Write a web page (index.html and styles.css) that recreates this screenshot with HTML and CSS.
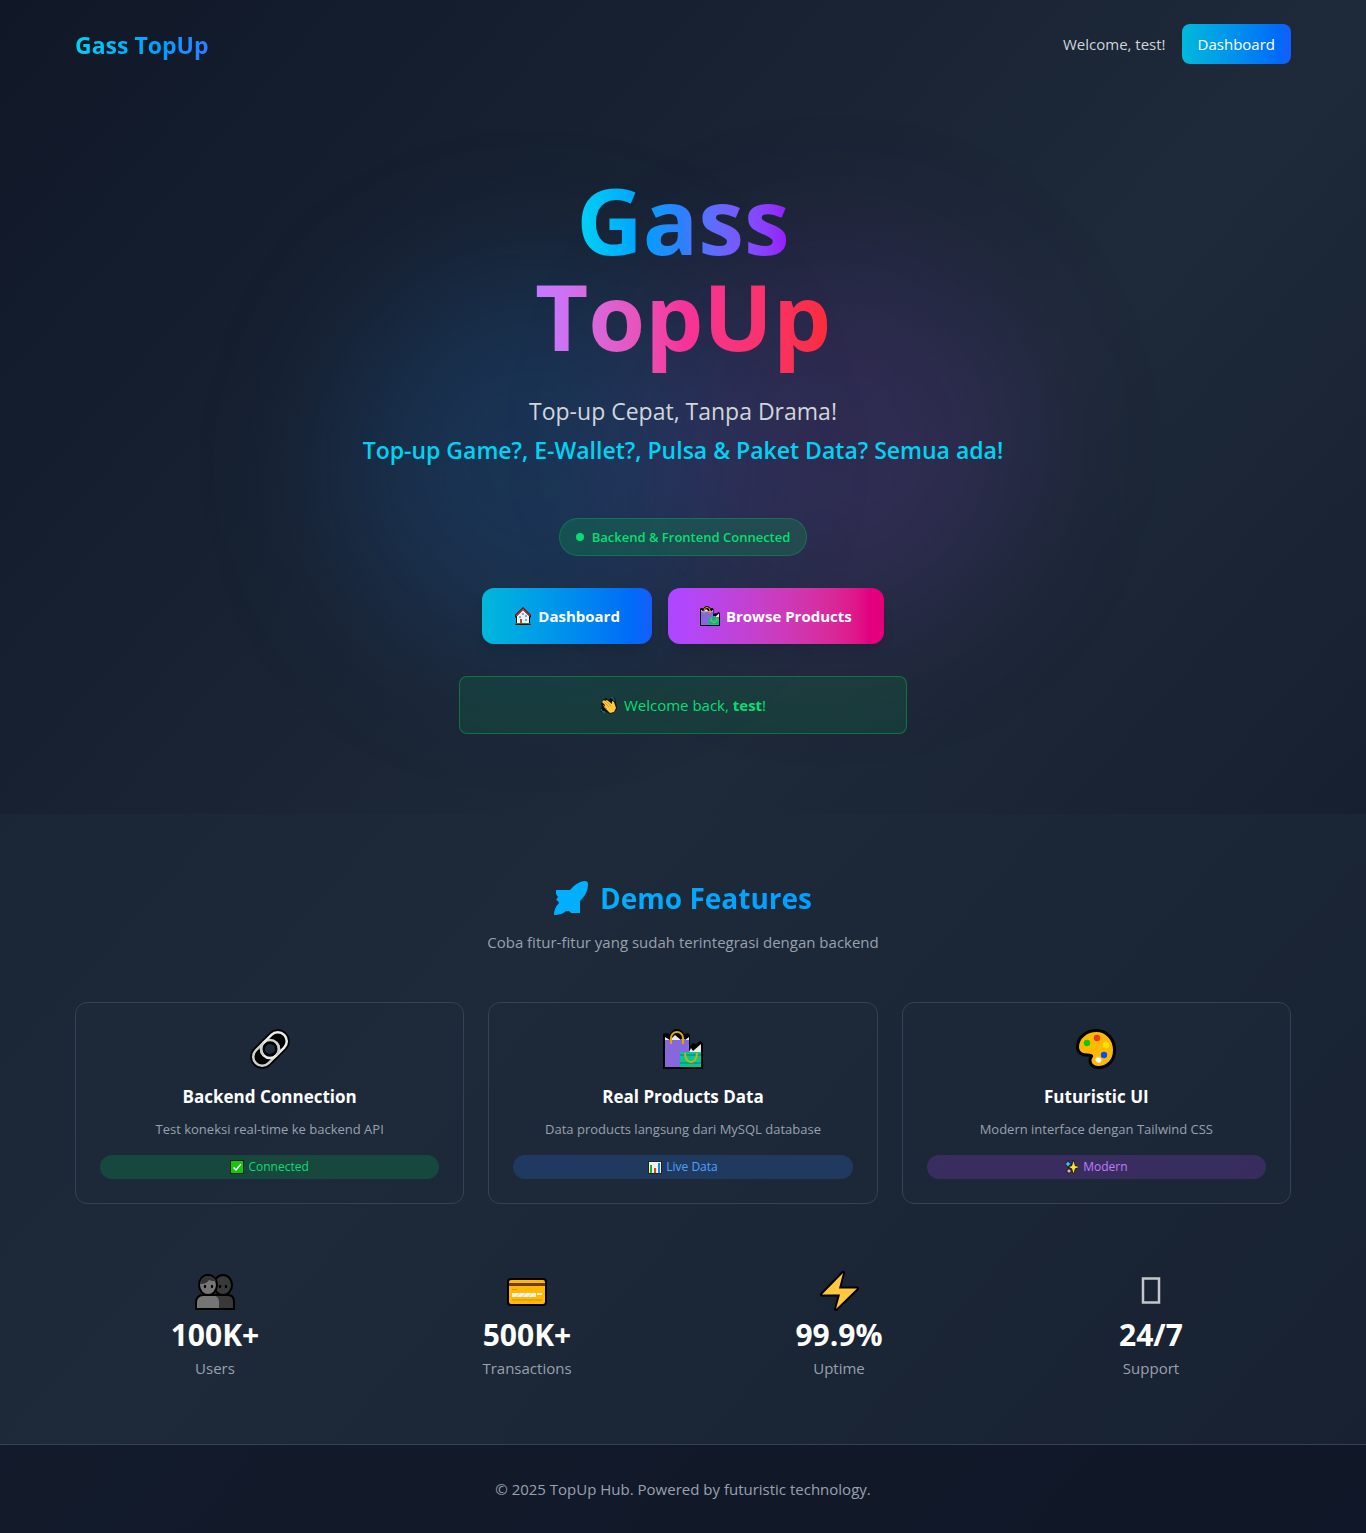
FILE: index.html
```html
<!DOCTYPE html>
<html lang="id">
<head>
<meta charset="utf-8">
<meta name="viewport" content="width=device-width, initial-scale=1">
<title>Gass TopUp</title>
<link rel="stylesheet" href="styles.css">
</head>
<body>
<svg class="sprite" aria-hidden="true">
  <symbol id="bags" viewBox="0 0 40 40">
    <path d="M0 40V5l3-1 4 1C8 2 11 0 14 0s6 2 7 5l4-1 2 2v11l3-3 3 1 4-3 3 2v26z" fill="#000"/>
    <path d="M2 11V8l5 3 5-5 6 5 2-3 2 3 4-3v5H2z" fill="#e8e8ee"/>
    <path d="M2 11h24v27H2z" fill="#8867dc"/>
    <path d="M26 23l2-4 2 3 8-7v8H26z" fill="#e8e8ee"/>
    <path d="M17 23h21v15H17z" fill="#00c896"/>
    <path d="M17 26h21M17 34h21" stroke="#0ba37d" stroke-width="2"/>
    <path d="M8 15V9a6 6 0 0 1 12 0v6M22 24c0 12 12 12 12 0" fill="none" stroke="#dea60c" stroke-width="2"/>
  </symbol>
</svg>

<header class="container topbar">
  <a class="logo" href="#">Gass TopUp</a>
  <nav class="account">
    <span>Welcome, test!</span>
    <a class="nav-button" href="#">Dashboard</a>
  </nav>
</header>

<main>
  <section class="hero">
    <div class="glow glow-blue"></div>
    <div class="glow glow-purple"></div>
    <div class="hero-content">
      <h1><span class="title-gass">Gass</span> <span class="title-topup">TopUp</span></h1>
      <p class="tagline">Top-up Cepat, Tanpa Drama!<br><strong>Top-up Game?, E-Wallet?, Pulsa &amp; Paket Data? Semua ada!</strong></p>
      <div class="status"><span class="dot"></span>Backend &amp; Frontend Connected</div>
      <div class="actions">
        <a class="cta cta-blue" href="#">
          <svg class="icon-md" viewBox="0 0 18 18" aria-hidden="true">
            <path d="M9 0l3 3 5 5v2l-1 1v5l1 2H1l1-2v-5L1 10V8z" fill="#111"/>
            <path d="M3 9l6-6 6 6v7H3z" fill="#f3f2f4"/>
            <path d="M2 9l7-7 7 7" fill="none" stroke="#d9281a" stroke-width="1.5"/>
            <path d="M5 9h2v2H5zM8 6h2v2H8zM11 8h2v2h-2zM11 12h2v2h-2z" fill="#4cc3f5"/>
            <path d="M6 12h2v4H6z" fill="#e03b20"/>
            <path d="M2 16.500h14" stroke="#1d8a1d"/>
          </svg>
          Dashboard</a>
        <a class="cta cta-pink" href="#"><svg class="icon-lg" aria-hidden="true"><use href="#bags"/></svg>Browse Products</a>
      </div>
      <div class="welcome">
        <svg class="icon-md" viewBox="0 0 18 18" aria-hidden="true">
          <path d="M3 4l3-2 3 2 2-3 4 1 1 5 1 5-2 4-5 2-4-2H1l-1-3 2-2-1-3z" fill="#111"/>
          <path d="M2 6l2-2 1 1 2-1 5 4V5l2 1 2 6-2 4-4 1-6-6 1-2z" fill="#ffc83d"/>
          <path d="M4 6l5 5M6 5l5 5M3 9l4 4" stroke="#c98a1b" stroke-width=".7"/>
          <path d="M11 2c2-1 3 1 3 3M1 13c0 2 2 3 4 3" fill="none" stroke="#209bc4" stroke-width="1"/>
        </svg>
        <span>Welcome back, <strong>test</strong>!</span>
      </div>
    </div>
  </section>

  <section class="features">
    <div class="container">
      <div class="section-head">
        <h2>
          <svg class="rocket" viewBox="0 0 34 34" aria-hidden="true"><path d="M2 9h14C21 3 27 0 31 0q3 0 3 3c0 8-4 13-8 17v12h-9l-2-2h-3q-4 4-12 4 0-7 5-12l-1-2-2-1 2-3-2-3z" fill="#00b0ff"/></svg>
          <span>Demo Features</span>
        </h2>
        <p>Coba fitur-fitur yang sudah terintegrasi dengan backend</p>
      </div>
      <div class="cards">
        <article class="card">
          <svg class="icon-xl" viewBox="0 0 40 40" aria-hidden="true">
            <g transform="translate(20 20) rotate(-45)">
              <rect x="-23" y="-12" width="46" height="24" rx="12" fill="#000"/>
              <rect x="-20" y="-9" width="29" height="18" rx="9" fill="none" stroke="#cfcfcf" stroke-width="2.500"/>
              <rect x="-9" y="-9" width="29" height="18" rx="9" fill="none" stroke="#ececec" stroke-width="2.500"/>
              <path d="M-9 0a9 9 0 0 1 9-9M9 0a9 9 0 0 1-9 9" fill="none" stroke="#cfcfcf" stroke-width="2.500"/>
              <circle r="5" fill="#1e2939"/>
            </g>
          </svg>
          <h3>Backend Connection</h3>
          <p>Test koneksi real-time ke backend API</p>
          <div class="badge badge-green">
            <svg class="icon-sm" viewBox="0 0 14 14" aria-hidden="true"><path d="M0 0h14v14H0z" fill="#0b2a16"/><path d="M1 1h12v12H1z" fill="#16c60c"/><path d="M3.500 7.500L6 10l5-6" fill="none" stroke="#fff" stroke-width="1.500"/></svg>
            Connected
          </div>
        </article>
        <article class="card">
          <svg class="icon-xl" aria-hidden="true"><use href="#bags"/></svg>
          <h3>Real Products Data</h3>
          <p>Data products langsung dari MySQL database</p>
          <div class="badge badge-blue">
            <svg class="icon-sm" viewBox="0 0 14 14" aria-hidden="true"><path d="M0 1h14v13H0z" fill="#222"/><path d="M1 2h12v11H1z" fill="#f0f0f0"/><path d="M2 5h2v8H2z" fill="#16b90c"/><path d="M6 8h2v5H6z" fill="#e8401c"/><path d="M10 3h2v10h-2z" fill="#1b86e0"/></svg>
            Live Data
          </div>
        </article>
        <article class="card">
          <svg class="icon-xl" viewBox="0 0 40 40" aria-hidden="true">
            <path d="M1.500 18C1.500 8 11 1.500 20.500 1.500c10 0 18 8.500 18 19.500s-7 17.500-16.500 17.500c-5 0-8-3.500-8-7 0-4 3-4 1-5-2-1-5 0-8-1s-5.500-3.500-5.500-7.500z" fill="#ffb900" stroke="#000" stroke-width="3"/>
            <circle cx="21" cy="9" r="3.200" fill="#f03a17"/><circle cx="11" cy="14" r="3.200" fill="#16c60c"/><circle cx="30" cy="16" r="3.200" fill="#ffe000"/><circle cx="28" cy="26" r="3.200" fill="#0050ff"/><ellipse cx="22.500" cy="31" rx="3" ry="2.500" transform="rotate(30 22.500 31)" fill="#fff"/>
          </svg>
          <h3>Futuristic UI</h3>
          <p>Modern interface dengan Tailwind CSS</p>
          <div class="badge badge-purple">
            <svg class="icon-sm" viewBox="0 0 14 14" aria-hidden="true"><g stroke="#111" stroke-width="1.200" paint-order="stroke"><path d="M8.500 1l1.500 5 4 1-4 1.500-1.500 5-1.500-5-3-1.500 3-1z" fill="#ffe02b"/><path d="M3 1l1 2 2 1-2 1-1 2-1-2-2-1 2-1z" fill="#3bc8e8"/><path d="M4 9l1 1 1 1-1 1-1 1-1-1-1-1 1-1z" fill="#f3a6b5"/></g></svg>
            Modern
          </div>
        </article>
      </div>

      <div class="stats">
        <div class="stat">
          <svg class="icon-xl" viewBox="0 0 40 40" aria-hidden="true">
            <path d="M20 24h13c4 0 6 3 6 7v7H20z" fill="#393939"/>
            <path d="M1 38v-7c0-4 3-7 7-7h9c4 0 7 3 7 7v7z" fill="#757575"/>
            <path d="M1 38v-7c0-4 3-7 7-7h25c4 0 6 3 6 7v7z" fill="none" stroke="#000" stroke-width="2"/>
            <g stroke="#000" stroke-width="2">
              <ellipse cx="28" cy="14" rx="9" ry="10" fill="#393939"/>
              <ellipse cx="13" cy="14" rx="9" ry="10" fill="#757575"/>
            </g>
            <path d="M5 13c0-5 4-8 8-8s7 2 8 5c-3 0-5 0-7-1-2 3-5 4-9 4z" fill="#333"/>
            <g fill="#000"><ellipse cx="10" cy="15.500" rx="1.200" ry="1.800"/><ellipse cx="17" cy="15.500" rx="1.200" ry="1.800"/><ellipse cx="25" cy="15.500" rx="1.200" ry="1.800"/><ellipse cx="31" cy="15.500" rx="1.200" ry="1.800"/></g>
          </svg>
          <div class="value">100K+</div>
          <div class="label">Users</div>
        </div>
        <div class="stat">
          <svg class="icon-xl" viewBox="0 0 40 40" aria-hidden="true">
            <rect y="7" width="40" height="28" rx="4" fill="#000"/>
            <rect x="2" y="9" width="36" height="24" rx="2" fill="#ffb900"/>
            <path d="M2 12h36v3H2z" fill="#6b3d2a"/>
            <path d="M5 18.500h5M5 29h30" stroke="#d98c00"/>
            <path d="M5 22h24v4H5zM30 22h5v2h-5z" fill="#f2efe6"/>
            <path d="M9 26l4-4M15 26l4-4M21 26l4-4" stroke="#a9d4e6" stroke-width=".8"/>
          </svg>
          <div class="value">500K+</div>
          <div class="label">Transactions</div>
        </div>
        <div class="stat">
          <svg class="icon-xl" viewBox="0 0 40 40" aria-hidden="true">
            <path d="M24 2L3 23.500h18L17 38l21-20.500H20z" fill="#ffc83d" stroke="#000" stroke-width="4" stroke-linejoin="round" paint-order="stroke"/>
          </svg>
          <div class="value">99.9%</div>
          <div class="label">Uptime</div>
        </div>
        <div class="stat">
          <svg class="icon-xl" viewBox="0 0 40 40" aria-hidden="true"><rect x="12" y="7.500" width="16" height="24" fill="none" stroke="#c3c7cb" stroke-width="2.500"/></svg>
          <div class="value">24/7</div>
          <div class="label">Support</div>
        </div>
      </div>
    </div>
  </section>
</main>

<footer>© 2025 TopUp Hub. Powered by futuristic technology.</footer>
</body>
</html>
```
FILE: styles.css
```css
:root {
  --gray-300: #d1d5dc;
  --gray-400: #99a1af;
  --green: #05df72;
  --cyan-400: oklch(78.9% 0.154 211.53);
  --cyan-500: oklch(71.5% 0.143 215.221);
  --blue-500: oklch(62.3% 0.214 259.815);
  --blue-600: oklch(54.6% 0.245 262.881);
}

* { box-sizing: border-box; margin: 0; }

body {
  font: 15px/24px "Open Sans", "Noto Sans", sans-serif;
  color: var(--gray-300);
  background: linear-gradient(to bottom right in oklab, #101828, #1e2939, #101828);
}

a { color: inherit; text-decoration: none; }
svg { display: block; flex: none; }
.sprite { position: absolute; width: 0; height: 0; }

.icon-sm { width: 14px; height: 14px; }
.icon-md { width: 18px; height: 18px; }
.icon-lg { width: 20px; height: 20px; }
.icon-xl { width: 40px; height: 40px; }

.container { max-width: 1280px; margin: 0 auto; padding: 0 32px; }

.topbar {
  display: flex;
  justify-content: space-between;
  align-items: center;
  padding-top: 24px;
  padding-bottom: 24px;
}
.logo, .title-gass, .title-topup, h2 span {
  color: transparent;
  background-clip: text;
  -webkit-background-clip: text;
}
.logo {
  padding-top: 2px;
  font-size: 23px;
  line-height: 32px;
  font-weight: 700;
  background-image: linear-gradient(to right in oklab, var(--cyan-400), var(--blue-500));
}
.account { display: flex; align-items: center; gap: 16px; }
.nav-button {
  padding: 8px 16px;
  border-radius: 8px;
  color: #fff;
  background: linear-gradient(to right in oklab, var(--cyan-500), var(--blue-600));
}

.hero { position: relative; padding: 80px 32px; text-align: center; }
.glow {
  position: absolute;
  width: 384px;
  height: 384px;
  border-radius: 50%;
  filter: blur(72px);
}
.glow-blue { top: 25%; left: 25%; background: rgb(30 130 235 / 18%); }
.glow-purple { bottom: 25%; right: 25%; background: rgb(173 70 255 / 13%); }
.hero-content { position: relative; display: flex; flex-direction: column; align-items: center; }

h1 {
  display: flex;
  flex-direction: column;
  align-items: center;
  padding-top: 4px;
  margin-bottom: 12px;
  font-size: 92px;
  line-height: 96px;
  font-weight: 700;
}
.title-gass { background-image: linear-gradient(to right in oklab, var(--cyan-400), var(--blue-500), oklch(55.8% 0.288 302.321)); }
/* the bottom padding keeps the descenders inside the clipped gradient */
.title-topup {
  padding-bottom: 16px;
  background-image: linear-gradient(to right in oklab, oklch(71.4% 0.203 305.504), oklch(65.6% 0.241 354.308), oklch(63.7% 0.237 25.331));
}

.tagline { font-size: 23px; line-height: 39px; margin-bottom: 48px; }
.tagline strong { font-weight: 600; color: #00d3f2; }

.status {
  display: flex;
  align-items: center;
  gap: 8px;
  padding: 8px 16px;
  margin-bottom: 32px;
  border: 1px solid rgb(0 201 80 / 30%);
  border-radius: 20px;
  background: rgb(0 201 80 / 20%);
  color: var(--green);
  font-size: 13px;
  line-height: 20px;
  font-weight: 600;
}
.dot { width: 8px; height: 8px; border-radius: 50%; background: var(--green); }

.actions { display: flex; gap: 16px; margin-bottom: 32px; }
.cta {
  display: flex;
  align-items: center;
  gap: 6px;
  padding: 16px 32px;
  border-radius: 12px;
  color: #fff;
  font-weight: 700;
  box-shadow: 0 10px 15px -3px rgb(0 0 0 / 10%), 0 4px 6px -4px rgb(0 0 0 / 10%);
}
.cta-blue { background: linear-gradient(to right in oklab, var(--cyan-500), var(--blue-600)); }
.cta-pink { background: linear-gradient(to right in oklab, oklch(62.7% 0.265 303.9), oklch(59.2% 0.249 0.584)); }

.welcome {
  display: flex;
  justify-content: center;
  align-items: center;
  gap: 6px;
  width: 100%;
  max-width: 448px;
  padding: 16px;
  border: 1px solid rgb(0 201 80 / 40%);
  border-radius: 8px;
  background: rgb(0 201 80 / 12%);
  color: var(--green);
}

.features { padding: 64px 0; background: rgb(30 41 57 / 50%); }
.section-head { text-align: center; margin-bottom: 48px; color: var(--gray-400); }
h2 {
  display: flex;
  justify-content: center;
  align-items: center;
  gap: 12px;
  padding-top: 2px;
  margin-bottom: 14px;
  font-size: 28px;
  line-height: 36px;
}
h2 span { background-image: linear-gradient(to right, #00b0ff, #009fff); }
.rocket { width: 34px; height: 34px; }

.cards { display: grid; grid-template-columns: repeat(3, 1fr); gap: 24px; }
.card {
  padding: 26px 24px 24px;
  border: 1px solid #364153;
  border-radius: 12px;
  background: rgb(30 41 57 / 50%);
  text-align: center;
}
.card .icon-xl { margin: 0 auto 14px; }
h3 { margin-bottom: 8px; font-size: 17px; line-height: 28px; color: #fff; }
.card p { margin-bottom: 16px; font-size: 13px; line-height: 20px; color: var(--gray-400); }
.badge {
  display: flex;
  justify-content: center;
  align-items: center;
  gap: 4px;
  padding: 4px 12px;
  border-radius: 12px;
  font-size: 12px;
  line-height: 16px;
}
.badge-green { background: rgb(0 201 80 / 20%); color: var(--green); }
.badge-blue { background: rgb(43 127 255 / 20%); color: #51a2ff; }
.badge-purple { background: rgb(173 70 255 / 20%); color: #c27aff; }

.stats { display: grid; grid-template-columns: repeat(4, 1fr); gap: 32px; margin-top: 67px; text-align: center; }
.stat .icon-xl { margin: 0 auto 6px; }
.value { margin-bottom: 3px; font-size: 30px; line-height: 36px; font-weight: 700; color: #fff; }
.label { color: var(--gray-400); }

footer {
  padding: 32px;
  border-top: 1px solid #364153;
  background: rgb(16 24 40 / 80%);
  color: var(--gray-400);
  text-align: center;
}
```
